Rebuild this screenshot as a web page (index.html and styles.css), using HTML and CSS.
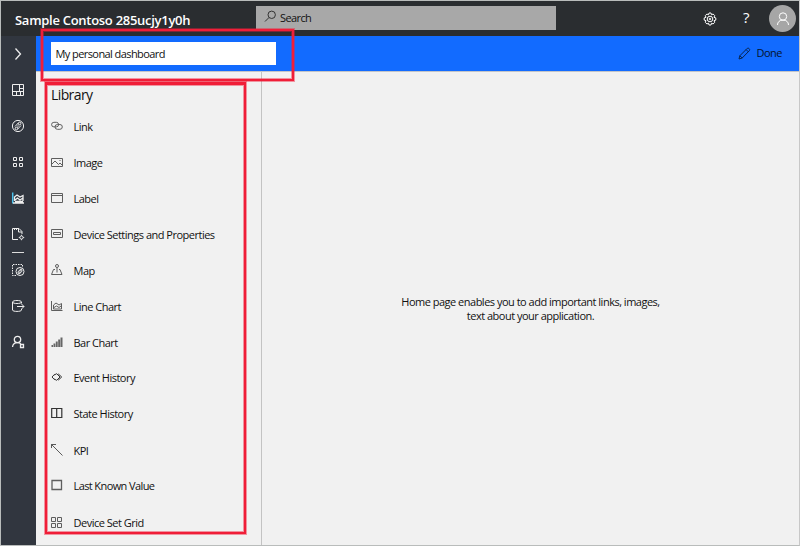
FILE: index.html
```html
<!DOCTYPE html>
<html lang="en">
<head>
<meta charset="utf-8">
<title>My personal dashboard</title>
<link rel="stylesheet" href="styles.css">
</head>
<body>
<div class="app">
  <header class="top">
    <h1 class="brand">Sample Contoso 285ucjy1y0h</h1>
    <div class="search">
      <svg width="13" height="13" viewBox="0 0 13 13"><circle cx="7.7" cy="4.8" r="3.7"/><path d="M5 7.5L1 11.5"/></svg>
      <span>Search</span>
    </div>
    <div class="tools">
      <svg class="gear" width="14" height="14" viewBox="0 0 14 14"><path d="M5.5 2.8L6 1h2l.5 1.8L10.1 2l1.6 1.6-.7 1.7 1.8.6v2.2l-1.8.6.7 1.6-1.6 1.7-1.6-.8L8 13H6l-.5-1.8-1.6.8-1.6-1.7.7-1.6-1.8-.6V5.9l1.8-.6-.7-1.7L3.900 2z"/><circle cx="7" cy="7" r="2.8"/><circle cx="7" cy="7" r=".8"/></svg>
      <span class="help">?</span>
      <span class="avatar"><svg width="14" height="16" viewBox="0 0 14 16"><circle cx="7" cy="5.5" r="3.7"/><path d="M1.500 14c0-3 2-4.900 5.500-4.900s5.500 1.900 5.500 4.900"/></svg></span>
    </div>
  </header>
  <div class="body">
    <nav class="rail">
      <span class="slot"><svg viewBox="0 0 14 14"><path d="M4.500 1.500l5 5.500-5 5.500" stroke-width="1.300"/></svg></span>
      <span class="slot"><svg viewBox="0 0 14 14"><path d="M1.500 1.500h11v11h-11zM8.500 1.500v7M1.500 8.500h11M5.500 8.500v4M8.500 5.500h4M9.500 8.500v4"/></svg></span>
      <span class="slot"><svg viewBox="0 0 14 14"><circle cx="7" cy="7" r="5.600"/><circle cx="8.600" cy="4.500" r="1.300"/><circle cx="5.500" cy="9.500" r="1.300"/><path d="M4 7.500L7.300 4M10 6.500L6.700 10M7 6.300v1.500"/></svg></span>
      <span class="slot"><svg viewBox="0 0 14 14"><path d="M2.500 2.500h3v3h-3zM8.500 2.500h3v3h-3zM2.500 8.500h3v3h-3zM8.500 8.500h3v3h-3z"/></svg></span>
      <span class="slot"><svg viewBox="0 0 14 14"><path d="M1.700 1.500v11" stroke="#4cc3ed" stroke-width="1.500"/><path d="M2 12h11M3.500 10V6l2.500-2 3 2 3-1.500V10M4 9l2.500-2 2.500 2 3-2M4 10.500h8" stroke-width="1.300"/></svg></span>
      <span class="slot"><svg viewBox="0 0 14 14"><path d="M7 12.500H1.500v-11H8l3 3V7M7.500 1.500V5H11M3.500 1.500v1.500M5.500 1.500v1.500"/><circle cx="10.500" cy="10.500" r="1.600"/><path d="M10.500 7.800v1M10.500 12.200v1M7.800 10.500h1M12.200 10.500h1"/></svg></span>
      <span class="slot"><i class="split"></i><svg viewBox="0 0 14 14"><path d="M5 12.500H1.500v-11h10V4" stroke-dasharray="1.500 1"/><circle cx="9" cy="8.500" r="4"/><circle cx="10" cy="7.200" r="1"/><circle cx="8" cy="9.800" r="1"/><path d="M7 8.800l2.200-2.300M11 8.200l-2.200 2.300"/></svg></span>
      <span class="slot"><svg viewBox="0 0 14 14"><path d="M10.500 4.500V3c0-2-9-2-9 0v8c0 1.900 9 1.900 9 0v-1M1.500 3c0 2 9 2 9 0M6 7.500h7M10.500 5l2.500 2.500-2.500 2.500"/></svg></span>
      <span class="slot"><svg viewBox="0 0 14 14"><circle cx="6.500" cy="4.500" r="3.200" stroke-width="1.300"/><path d="M1.500 12c.4-3 2-4.300 5-4.300 1.500 0 2.500.4 3.300 1.300M9.500 9.500h3v3h-3z" stroke-width="1.300"/></svg></span>
    </nav>
    <section class="work">
      <div class="bar">
        <div class="field">My personal dashboard</div>
        <div class="done"><svg width="13" height="13" viewBox="0 0 13 13"><path d="M1 12l.8-3.200L9.300 1.300c1-.9 3.100 1 2.200 2.200L4.200 11zM8 2.500l2.300 2.300M1.800 8.800L4.200 11"/></svg><span>Done</span></div>
      </div>
      <div class="panes">
        <aside class="library">
          <h2>Library</h2>
          <ul>
            <li><svg viewBox="0 0 12 12"><rect x=".6" y="2.300" width="7" height="4.600" rx="2.300"/><rect x="4" y="4.500" width="7.300" height="4.800" rx="2.400"/></svg><span>Link</span></li>
            <li><svg viewBox="0 0 12 12"><path d="M.5 2.500h11v8H.5zM1 8l3-3 3.500 3.500L9 7l2.500 2.500M8.500 4.500h1"/></svg><span>Image</span></li>
            <li><svg viewBox="0 0 12 12"><path d="M.5 1.500h11v9H.5zM.5 3.500h11"/></svg><span>Label</span></li>
            <li><svg viewBox="0 0 12 12"><path d="M.5 1.500h11v8H.5zM2.500 4.500h7v2h-7z"/></svg><span>Device Settings and Properties</span></li>
            <li><svg viewBox="0 0 12 12"><circle cx="6" cy="2" r="1.500"/><path d="M6 3.500v5M4 5.500H2.500l-2 5h10.500l-2-5H8"/></svg><span>Map</span></li>
            <li><svg viewBox="0 0 12 12"><path d="M.5 1v9.500h11M2.500 9V5L5 3l3 2 2.500-1.500V9zM3 7.500L5.500 6 8 7.500 10 6"/></svg><span>Line Chart</span></li>
            <li><svg class="bars" viewBox="0 0 12 12"><path d="M.5 9H2v2H.5zM2.500 7.500h1.800V11H2.500zM4.800 5.500h1.900V11H4.800zM7.200 3.500h1.900V11H7.200zM9.500 1.500h2V11h-2z"/></svg><span>Bar Chart</span></li>
            <li><svg class="dark" viewBox="0 0 12 12"><path d="M3.700 3.200L1 6l2.700 2.800M3.200 4l2.500-1.300L9 6 5.700 9.300 3.200 8M7.200 2.800L10.700 6 7.200 9.200"/></svg><span>Event History</span></li>
            <li><svg class="dark" viewBox="0 0 12 12"><path d="M.7 1.500h10.100v9H.7zM5.700 1.500v9" stroke-width="1.200"/></svg><span>State History</span></li>
            <li><svg class="dark" viewBox="0 0 12 12"><path d="M.5 4V.5H5M.5.5l11 11" stroke-width=".8"/></svg><span>KPI</span></li>
            <li class="tight"><svg viewBox="0 0 12 12"><path d="M1 1.500h9.500v9H1z" stroke-width="1.300"/></svg><span>Last Known Value</span></li>
            <li><svg viewBox="0 0 12 12"><path d="M.5 1.500h4v4h-4zM6.500 1.500h4v4h-4zM.5 7.500h4v4h-4zM6.500 7.500h4v4h-4z"/></svg><span>Device Set Grid</span></li>
          </ul>
        </aside>
        <main class="canvas"><p>Home page enables you to add important links, images,<br>text about your application.</p></main>
      </div>
    </section>
  </div>
  <div class="mark mark-title"></div>
  <div class="mark mark-library"></div>
</div>
</body>
</html>
```
FILE: styles.css
```css
* { box-sizing: border-box; }
body { margin: 0; font: 11px/14px "Open Sans", "Noto Sans", sans-serif; letter-spacing: -.5px; color: #111; }
svg { fill: none; stroke: currentColor; stroke-width: 1; flex: none; }
.app { position: relative; width: 800px; height: 546px; border: 1px solid #b9bcbb; border-right-color: #c8c8c8; display: flex; flex-direction: column; overflow: hidden; background: #f1f1f1; }
.top { height: 35px; flex: none; background: #2a2d30; color: #fff; display: flex; align-items: center; }
.brand { margin: 0; padding: 3px 0 0 14px; width: 255px; font-size: 13px; line-height: 18px; font-weight: 600; letter-spacing: -.28px; white-space: nowrap; }
.search { width: 300px; height: 24px; background: #a8a8a8; color: #111; display: flex; align-items: center; gap: 3px; padding-left: 8px; margin-top: -1px; letter-spacing: -.6px; }
.search svg { margin-top: -3px; color: #333; }
.tools { margin-left: auto; display: flex; align-items: center; padding-right: 3px; }
.help { width: 10px; margin: -4px 18px 0 24px; font-size: 15px; text-align: center; }
.avatar { width: 27px; height: 27px; border-radius: 50%; background: #a6a6a6; display: flex; align-items: center; justify-content: center; }
.body { flex: 1; display: flex; min-height: 0; }
.rail { width: 35px; flex: none; background: #31363f; color: #eee; display: flex; flex-direction: column; }
.slot { position: relative; height: 36px; display: flex; align-items: center; justify-content: center; padding-right: 2px; }
.slot svg { width: 14px; height: 14px; }
.split { position: absolute; top: 0; left: 11px; width: 12px; height: 1px; background: #ddd; }
.work { flex: 1; display: flex; flex-direction: column; min-width: 0; }
.bar { height: 36px; flex: none; background: #126bff; border-bottom: 1px solid #c3c5c8; display: flex; align-items: center; justify-content: space-between; padding: 0 17px 0 15px; }
.field { width: 225px; height: 23px; background: #fff; padding: 5px 4.5px; line-height: 14px; letter-spacing: -.58px; }
.done { display: flex; align-items: center; gap: 5px; color: #082550; }
.done span { color: #05132c; margin-top: -1px; }
.panes { flex: 1; display: flex; min-height: 0; }
.library { width: 226px; flex: none; border-right: 1px solid #c3c3c3; padding: 13px 0 0 15px; }
.library h2 { margin: 0; height: 24px; font-size: 14px; line-height: 20px; font-weight: 400; letter-spacing: -.72px; word-spacing: 0; letter-spacing: -.6px; }
.library ul { margin: 0; padding: 0; list-style: none; display: grid; grid-template-rows: repeat(7, 36px) 34px 38px 36px 34px 40px; }
.library li { display: flex; align-items: center; gap: 10.5px; }
.library li svg { width: 12px; height: 12px; margin-top: -3px; color: #5e5e5e; }
.library li .dark { color: #333; }
.library li .bars { fill: #666; stroke: none; }
.library .tight { letter-spacing: -.6px; }
.canvas { flex: 1; padding: 223px 0 0; }
.canvas p { margin: 0; text-align: center; }
.mark { position: absolute; border: 2px solid #f01e38; box-shadow: 0 0 0 1px #f01e3870, inset 0 0 0 1px #f01e3870; }
.mark-title { left: 40px; top: 28px; width: 253px; height: 52px; }
.mark-library { left: 44px; top: 81px; width: 201px; height: 452px; border-top-width: 3px; }
```
